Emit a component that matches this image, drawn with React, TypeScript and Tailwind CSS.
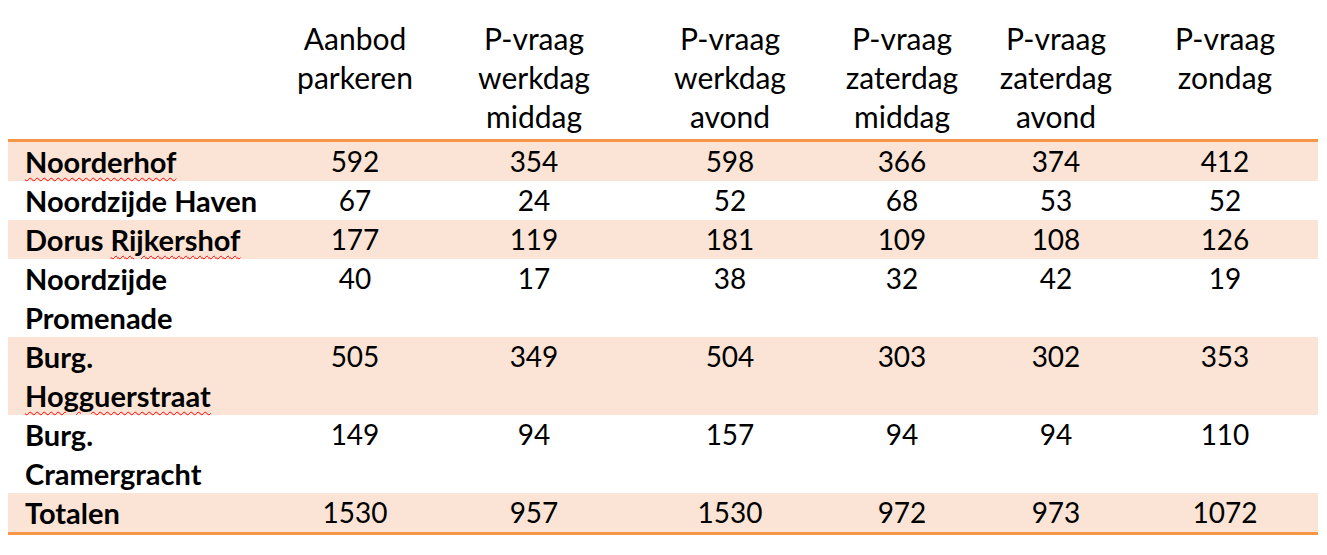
import React from "react";

type Row = { name: React.ReactNode; vals: string[]; shaded: boolean };

const Spell = ({ children }: { children: React.ReactNode }) => (
  <span className="underline decoration-wavy decoration-[#ff0000] decoration-1 underline-offset-[4px]">{children}</span>
);

const rows: Row[] = [
  { name: <Spell>Noorderhof</Spell>, vals: ["592", "354", "598", "366", "374", "412"], shaded: true },
  { name: "Noordzijde Haven", vals: ["67", "24", "52", "68", "53", "52"], shaded: false },
  { name: <>Dorus <Spell>Rijkershof</Spell></>, vals: ["177", "119", "181", "109", "108", "126"], shaded: true },
  { name: <>Noordzijde<br />Promenade</>, vals: ["40", "17", "38", "32", "42", "19"], shaded: false },
  { name: <>Burg.<br /><Spell>Hogguerstraat</Spell></>, vals: ["505", "349", "504", "303", "302", "353"], shaded: true },
  { name: <>Burg.<br />Cramergracht</>, vals: ["149", "94", "157", "94", "94", "110"], shaded: false },
  { name: "Totalen", vals: ["1530", "957", "1530", "972", "973", "1072"], shaded: true },
];

const headers: React.ReactNode[] = [
  <>Aanbod<br />parkeren</>,
  <>P-vraag<br />werkdag<br />middag</>,
  <>P-vraag<br />werkdag<br />avond</>,
  <>P-vraag<br />zaterdag<br />middag</>,
  <>P-vraag<br />zaterdag<br />avond</>,
  <>P-vraag<br />zondag</>,
];

export default function App() {
  return (
    <div className="w-[1327px] h-[555px] bg-white pt-[19px] pl-[8px] font-['Lato','Liberation_Sans',sans-serif] leading-[39px] text-black">
      <table className="border-collapse w-[1310px] table-fixed">
        <colgroup>
          <col className="w-[270px]" />
          <col className="w-[154px]" />
          <col className="w-[204px]" />
          <col className="w-[188px]" />
          <col className="w-[156px]" />
          <col className="w-[152px]" />
          <col className="w-[186px]" />
        </colgroup>
        <thead>
          <tr className="border-b-[3px] border-[#f79646]">
            <th className="p-0" />
            {headers.map((h, i) => (
              <th key={i} className="p-0 pb-[3px] align-top text-center font-normal text-[30px]">
                {h}
              </th>
            ))}
          </tr>
        </thead>
        <tbody>
          {rows.map((r, i) => (
            <tr
              key={i}
              className={`${r.shaded ? "bg-[#fbe4d5]" : "bg-white"} ${i === rows.length - 1 ? "border-b-[3px] border-[#f79646]" : ""}`}
            >
              <td className="p-0 pl-[17px] align-top font-bold text-[29px]">{r.name}</td>
              {r.vals.map((v, j) => (
                <td key={j} className="p-0 align-top text-center text-[28px]">
                  {v}
                </td>
              ))}
            </tr>
          ))}
        </tbody>
      </table>
    </div>
  );
}
